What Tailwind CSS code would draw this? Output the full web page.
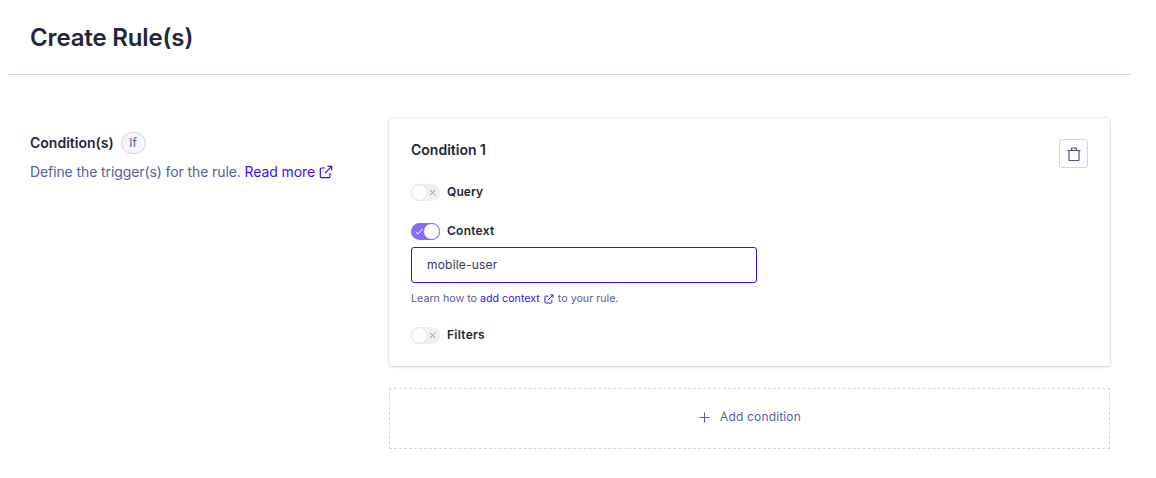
<!DOCTYPE html>
<html lang="en">
<head>
<meta charset="utf-8">
<title>Create Rule(s)</title>
<script src="https://cdn.jsdelivr.net/npm/@tailwindcss/browser@4"></script>
</head>
<body class="bg-white font-['Inter',sans-serif] antialiased overflow-hidden">
<div class="ml-2 w-[1123px] h-[478px]">
  <header class="h-[75px] border-b border-[#d6d3ea] pl-[22px] pt-[22px]">
    <h1 class="text-[24px] leading-[32px] font-semibold text-[#23263b] tracking-[-0.15px]">Create Rule(s)</h1>
  </header>
  <div class="flex pt-[43px] pl-[22px] pr-[21px]">
    <div class="w-[359px] shrink-0 pt-[13px]">
      <div class="flex items-center gap-[7px] h-[24px]">
        <span class="text-[14px] leading-[20px] font-semibold text-[#23263b]">Condition(s)</span>
        <span class="flex items-center justify-center w-[25px] h-[22px] rounded-full border border-[#d6d3ea] bg-[#f5f5fa] text-[12px] text-[#5a5e9a]">If</span>
      </div>
      <p class="mt-[7px] flex items-center text-[14px] leading-[20px] text-[#5a5e9a] whitespace-nowrap tracking-[-0.1px]">Define the trigger(s) for the rule.&nbsp;<a class="text-[#3a12f0]">Read more</a>
        <svg class="ml-[4px] w-[14px] h-[14px] text-[#3a12f0]" viewBox="0 0 14 14" fill="none" stroke="currentColor" stroke-width="1.2"><path d="M11 8v3.5a1.2 1.2 0 0 1-1.2 1.2H2.5a1.2 1.2 0 0 1-1.2-1.2V4.2A1.2 1.2 0 0 1 2.500 3H6"/><path d="M8.500 1.300h4.200v4.200M12.700 1.300 6 8"/></svg>
      </p>
    </div>
    <div class="flex-1 min-w-0">
      <section class="h-[248px] rounded-[4px] bg-white shadow-[0_0_0_1px_rgba(35,38,59,0.05),0_1px_3px_rgba(35,38,59,0.18)] pl-[22px] pr-[22px] relative">
        <div class="flex justify-between pt-[21px] h-[54px]">
          <h2 class="mt-[1px] text-[14px] leading-[20px] font-semibold text-[#23263b]">Condition 1</h2>
          <button class="flex items-center justify-center w-[29px] h-[29px] rounded-[3px] border border-[#d6d3ea] text-[#4f4f8f]">
            <svg class="w-[14px] h-[14px]" viewBox="0 0 14 14" fill="none" stroke="currentColor" stroke-width="1.200"><path d="M.5 3.500h13M4.500 3.500V1.800a.8.8 0 0 1 .8-.8h3.400a.8.8 0 0 1 .8.800v1.700M2 3.500v9.200a.8.8 0 0 0 .8.800h8.400a.8.8 0 0 0 .8-.8V3.500"/></svg>
          </button>
        </div>
        <div class="flex items-center gap-[7px] h-[20px] mt-[10px]">
          <span class="relative w-[29px] h-[17px] rounded-full bg-[#f0f0f7]">
            <span class="absolute left-0 top-0 w-[17px] h-[17px] rounded-full bg-white border border-[#e2e0f0]"></span>
            <svg class="absolute right-[4px] top-[5px] w-[7px] h-[7px]" viewBox="0 0 7 7" fill="none" stroke="#8e8fb8" stroke-width="1"><path d="M.8.800l5.400 5.400M6.200.800.800 6.200"/></svg>
          </span>
          <span class="text-[12px] leading-[20px] font-semibold text-[#23263b] tracking-[0.1px]">Query</span>
        </div>
        <div class="flex items-center gap-[7px] h-[20px] mt-[19px]">
          <span class="relative w-[29px] h-[17px] rounded-full bg-[#8270f5]">
            <span class="absolute right-0 top-0 w-[17px] h-[17px] rounded-full bg-white border border-[#8270f5]"></span>
            <svg class="absolute left-[4px] top-[5px] w-[8px] h-[7px]" viewBox="0 0 8 7" fill="none" stroke="#fff" stroke-width="1"><path d="M.6 3.800 3 6 7.400 1"/></svg>
          </span>
          <span class="text-[12px] leading-[20px] font-semibold text-[#23263b] tracking-[0.25px]">Context</span>
        </div>
        <div class="mt-[6px] flex items-center w-[346px] h-[36px] rounded-[3px] border border-[#3a12f0] pl-[15px] text-[12px] text-[#36395a] tracking-[0.2px]">mobile-user</div>
        <p class="mt-[8px] flex items-center text-[10.7px] leading-[16px] text-[#5a5e9a] whitespace-nowrap">Learn how to&nbsp;<a class="text-[#3a12f0]">add context</a>
          <svg class="mx-[4px] w-[10px] h-[10px] text-[#3a12f0]" viewBox="0 0 14 14" fill="none" stroke="currentColor" stroke-width="1.400"><path d="M11 8v3.500a1.200 1.200 0 0 1-1.200 1.200H2.500a1.200 1.200 0 0 1-1.200-1.200V4.200A1.200 1.200 0 0 1 2.500 3H6"/><path d="M8.500 1.300h4.200v4.200M12.700 1.300 6 8"/></svg>
          to your rule.</p>
        <div class="flex items-center gap-[7px] h-[20px] mt-[18px]">
          <span class="relative w-[29px] h-[17px] rounded-full bg-[#f0f0f7]">
            <span class="absolute left-0 top-0 w-[17px] h-[17px] rounded-full bg-white border border-[#e2e0f0]"></span>
            <svg class="absolute right-[4px] top-[5px] w-[7px] h-[7px]" viewBox="0 0 7 7" fill="none" stroke="#8e8fb8" stroke-width="1"><path d="M.8.800l5.400 5.400M6.200.800.800 6.200"/></svg>
          </span>
          <span class="text-[12px] leading-[20px] font-semibold text-[#23263b] tracking-[0.25px]">Filters</span>
        </div>
      </section>
      <button class="mt-[22px] flex w-full h-[61px] items-center justify-center gap-[10px] border border-dashed border-[#d6d3ea] pb-[3px] pl-[1px] text-[12px] text-[#5a5e9a] tracking-[0.15px]">
        <svg class="w-[11px] h-[11px] mt-[1px]" viewBox="0 0 11 11" fill="none" stroke="currentColor" stroke-width="1.100"><path d="M5.500.500v10M.500 5.500h10"/></svg>
        Add condition
      </button>
    </div>
  </div>
</div>
</body>
</html>
